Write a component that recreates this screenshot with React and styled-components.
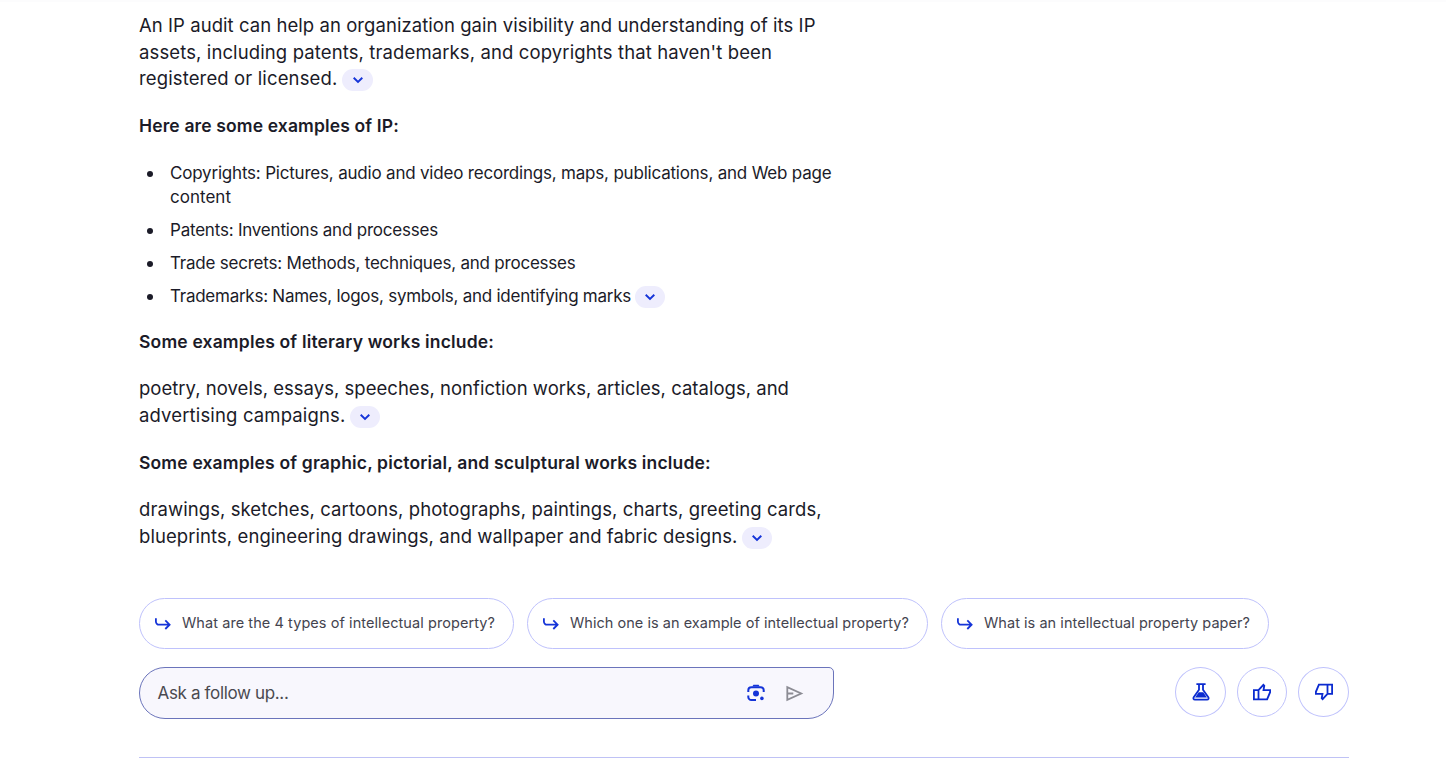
import React from 'react';
import styled, { createGlobalStyle } from 'styled-components';

const GlobalStyle = createGlobalStyle`
  * { box-sizing: border-box; }
  body {
    margin: 0;
    background: #fff;
    color: #1b1b28;
    font-family: Inter, "Open Sans", sans-serif;
    overflow: hidden;
  }
`;

const Page = styled.main`
  width: 1446px;
  height: 781px;
  padding: 10px 97px 0 139px;
  border-top: 2px solid #fcfcfd;
  display: flex;
  flex-direction: column;
`;

const Answer = styled.article`
  display: flex;
  flex-direction: column;
  height: 586px;
  white-space: nowrap;
`;

const Paragraph = styled.div`
  font-size: 18.5px;
  line-height: 26.67px;
  margin-bottom: ${(p) => p.$gap}px;
`;

const Heading = styled.h3`
  margin: 0 0 ${(p) => p.$gap}px;
  font-size: 17.5px;
  font-weight: 600;
  line-height: 24px;
  letter-spacing: ${(p) => p.$track}px;
`;

const Line = styled.div`
  display: flex;
  align-items: center;
  letter-spacing: ${(p) => p.$track}px;
`;

const List = styled.ul`
  list-style: none;
  margin: 0 0 22px;
  padding: 0;
  display: flex;
  flex-direction: column;
  gap: 9px;
`;

const Item = styled.li`
  display: flex;
  font-size: 17px;
  line-height: 24px;
  &::before {
    content: '';
    width: 6px;
    height: 6px;
    margin: 10px 17px 0 8px;
    border-radius: 50%;
    background: #1b1b28;
  }
`;

const ExpandButton = styled.button`
  display: flex;
  align-items: center;
  justify-content: center;
  width: ${(p) => p.$w || 30}px;
  height: 22px;
  margin: 2px 0 -1px 5px;
  padding: 0;
  border: 0;
  border-radius: 11px;
  background: #eeedfd;
  color: #1534d8;
  ${Item} & { margin: 1px 0 0 4px; }
`;

const Chips = styled.div`
  display: flex;
  gap: 13px;
`;

const Chip = styled.button`
  display: flex;
  align-items: center;
  gap: 9px;
  width: ${(p) => p.$w}px;
  height: 51px;
  padding: 0 0 2px 13px;
  border: 1px solid #bfc2fc;
  border-radius: 26px;
  background: #fff;
  color: #44444f;
  font: 400 14.5px Inter, "Open Sans", sans-serif;
  letter-spacing: ${(p) => p.$track}px;
  white-space: nowrap;
  svg { color: #1534d8; position: relative; top: 2px; }
`;

const Footer = styled.div`
  display: flex;
  justify-content: space-between;
  align-items: flex-start;
  margin-top: 18px;
  padding-bottom: 38px;
  border-bottom: 1px solid #bfc2f5;
  width: 1210px;
`;

const AskBox = styled.div`
  display: flex;
  align-items: center;
  width: 695px;
  height: 52px;
  padding: 0 29px 0 17.5px;
  border: 1px solid #6b74bb;
  border-radius: 26px 5px 26px 26px;
  background: #f8f7fd;
`;

const Placeholder = styled.span`
  flex: 1;
  font-size: 17px;
  letter-spacing: -0.34px;
  color: #4a4a50;
`;

const AskIcons = styled.div`
  display: flex;
  gap: 18px;
`;

const Actions = styled.div`
  display: flex;
  gap: 11px;
`;

const RoundButton = styled.button`
  display: flex;
  align-items: center;
  justify-content: center;
  width: ${(p) => p.$w || 51}px;
  height: 50px;
  padding: 0;
  border: 1px solid #bfc2fc;
  border-radius: 50%;
  background: #fff;
  color: #0b2bd0;
`;

const Stroke = ({ size = 20, width = 1.8, children, ...rest }) => (
  <svg width={size} height={size} viewBox="0 0 20 20" fill="none" stroke="currentColor" strokeWidth={width} {...rest}>
    {children}
  </svg>
);

const Expand = ({ w }) => (
  <ExpandButton $w={w} aria-label="Show sources">
    <svg width="12" height="8" viewBox="0 0 12 8" fill="none" stroke="currentColor" strokeWidth="1.9">
      <path d="M1.7 1.7 6 5.9 10.3 1.7" />
    </svg>
  </ExpandButton>
);

const ArrowIcon = () => (
  <Stroke width={1.8}>
    <path d="M2.9 3.3v3.2a3.2 3.2 0 0 0 3.2 3.2h10M12.3 5.4l4.3 4.3-4.3 4.3" />
  </Stroke>
);

const LensIcon = () => (
  <Stroke width={2} color="#1534d8">
    <path d="M2.3 9V7.2a3 3 0 0 1 3-3h9.4a3 3 0 0 1 3 3V9M2.3 12.5V14a3 3 0 0 0 3 3H10" />
    <path d="M6.3 3.6 7.4 1.7h5.2l1.1 1.9z" fill="currentColor" stroke="none" />
    <circle cx="10" cy="10.5" r="3" fill="currentColor" stroke="none" />
    <circle cx="15.9" cy="15.4" r="1.8" fill="currentColor" stroke="none" />
  </Stroke>
);

const SendIcon = () => (
  <Stroke width={1.8} color="#8c8c94">
    <path d="M3.3 4.2v12.6L17.2 10.5zM3.3 10.5h6" />
  </Stroke>
);

const FlaskIcon = () => (
  <Stroke width={1.8}>
    <path d="M5.4 2.2h9.2M8 2.2v5.5L2.7 15.3c-.8 1.2-.1 2.4 1.2 2.4h12.2c1.3 0 2-1.2 1.2-2.4L12 7.7V2.2" />
    <path d="M7.7 10.3h4.6l3.6 5.3H4.1z" fill="currentColor" stroke="none" />
  </Stroke>
);

const ThumbIcon = ({ down }) => (
  <Stroke>
    <path
      transform={down ? 'rotate(180 10 10)' : undefined}
      d="M1.9 8.1h4.6v9.3H1.9zM6.5 8.1l4.9-5.3.9.9-.8 4.4h6.6v2.1l-3 7.2H6.5z"
    />
  </Stroke>
);

export default function App() {
  return (
    <>
      <GlobalStyle />
      <Page>
        <Answer>
          <Paragraph $gap={22}>
            <Line $track={0.058}>An IP audit can help an organization gain visibility and understanding of its IP</Line>
            <Line $track={0.115}>assets, including patents, trademarks, and copyrights that haven't been</Line>
            <Line $track={0.13}>registered or licensed.<Expand w={31} /></Line>
          </Paragraph>
          <Heading $gap={23} $track={0.135}>Here are some examples of IP:</Heading>
          <List>
            <Item>
              <div>
                <Line $track={-0.2}>Copyrights: Pictures, audio and video recordings, maps, publications, and Web page</Line>
                <Line $track={0.02}>content</Line>
              </div>
            </Item>
            <Item><Line $track={-0.211}>Patents: Inventions and processes</Line></Item>
            <Item><Line $track={-0.215}>Trade secrets: Methods, techniques, and processes</Line></Item>
            <Item><Line $track={-0.252}>Trademarks: Names, logos, symbols, and identifying marks<Expand /></Line></Item>
          </List>
          <Heading $gap={21} $track={0.17}>Some examples of literary works include:</Heading>
          <Paragraph $gap={22.7}>
            <Line $track={0.022}>poetry, novels, essays, speeches, nonfiction works, articles, catalogs, and</Line>
            <Line $track={0.145}>advertising campaigns.<Expand /></Line>
          </Paragraph>
          <Heading $gap={21} $track={0.165}>Some examples of graphic, pictorial, and sculptural works include:</Heading>
          <Paragraph $gap={0}>
            <Line $track={0.082}>drawings, sketches, cartoons, photographs, paintings, charts, greeting cards,</Line>
            <Line $track={0.07}>blueprints, engineering drawings, and wallpaper and fabric designs.<Expand /></Line>
          </Paragraph>
        </Answer>
        <Chips>
          <Chip $w={375} $track={0.071}><ArrowIcon />What are the 4 types of intellectual property?</Chip>
          <Chip $w={401} $track={0.032}><ArrowIcon />Which one is an example of intellectual property?</Chip>
          <Chip $w={328} $track={0.045}><ArrowIcon />What is an intellectual property paper?</Chip>
        </Chips>
        <Footer>
          <AskBox>
            <Placeholder>Ask a follow up...</Placeholder>
            <AskIcons>
              <LensIcon />
              <SendIcon />
            </AskIcons>
          </AskBox>
          <Actions>
            <RoundButton aria-label="Labs"><FlaskIcon /></RoundButton>
            <RoundButton $w={50} aria-label="Good response"><ThumbIcon /></RoundButton>
            <RoundButton aria-label="Bad response"><ThumbIcon down /></RoundButton>
          </Actions>
        </Footer>
      </Page>
    </>
  );
}
